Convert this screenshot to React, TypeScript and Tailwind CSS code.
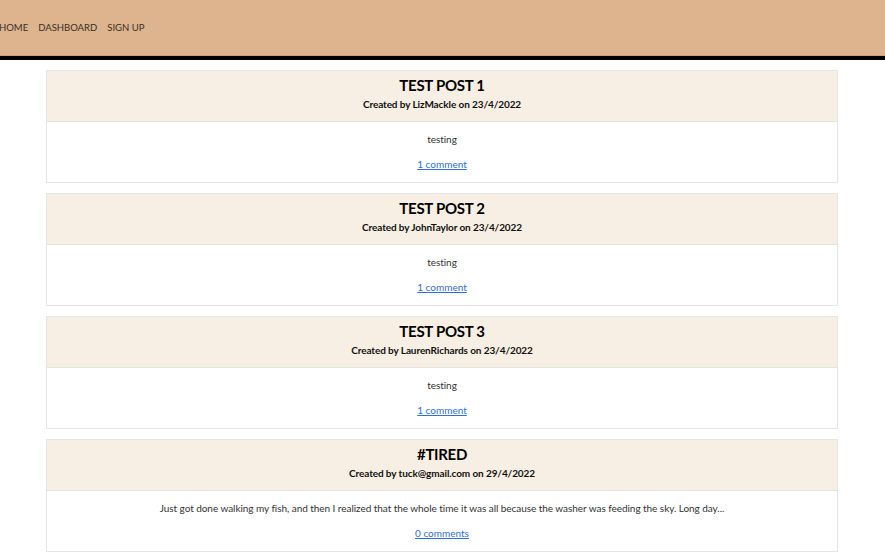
import React from "react";

const posts = [
  { title: "TEST POST 1", author: "LizMackle", date: "23/4/2022", body: "testing", comments: "1 comment" },
  { title: "TEST POST 2", author: "JohnTaylor", date: "23/4/2022", body: "testing", comments: "1 comment" },
  { title: "TEST POST 3", author: "LaurenRichards", date: "23/4/2022", body: "testing", comments: "1 comment" },
  {
    title: "#TIRED",
    author: "tuck@gmail.com",
    date: "29/4/2022",
    body: "Just got done walking my fish, and then I realized that the whole time it was all because the washer was feeding the sky. Long day...",
    comments: "0 comments",
  },
];

export default function App() {
  return (
    <div className="min-h-[557px] bg-white" style={{ fontFamily: 'Lato, "Open Sans", sans-serif' }}>
      <header className="h-[56px] bg-[#ddb48e] border-b border-[#c9a27f] flex items-center">
        <nav className="flex gap-[10px] text-[9.5px] text-[#3a2e26] mt-[1px]">
          <a className="-ml-[1px]">HOME</a>
          <a>DASHBOARD</a>
          <a>SIGN UP</a>
        </nav>
      </header>
      <div className="h-[4px] bg-black" />
      <main className="flex flex-col gap-[10px] pt-[10px] pl-[46px] pr-[47px]">
        {posts.map((p) => (
          <article key={p.title} className="border border-[#e6e6e6] bg-white">
            <div className="bg-[#f7efe3] border-b border-[#e6e3de] h-[51px] flex flex-col items-center pt-[4px]">
              <h2 className="text-[15px] leading-[20px] font-bold tracking-[-0.3px] text-black">{p.title}</h2>
              <p className="text-[10px] leading-[14px] font-bold tracking-[-0.1px] text-[#111] mt-[2px]">
                Created by {p.author} on {p.date}
              </p>
            </div>
            <div className="h-[60px] flex flex-col items-center pt-[10px]">
              <p className="text-[10px] leading-[14px] tracking-[-0.05px] text-[#333]">{p.body}</p>
              <a className="text-[10px] leading-[14px] text-[#2f6fd6] underline mt-[11px]">{p.comments}</a>
            </div>
          </article>
        ))}
      </main>
    </div>
  );
}
